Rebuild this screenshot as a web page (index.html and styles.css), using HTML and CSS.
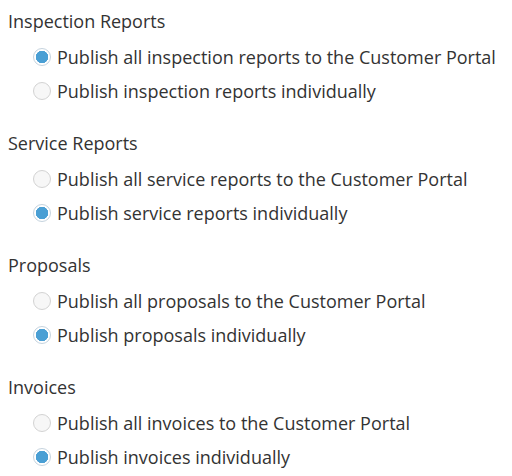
FILE: index.html
```html
<!DOCTYPE html>
<html lang="en">
<head>
  <meta charset="UTF-8">
  <title>Customer Portal Publishing</title>
  <link rel="stylesheet" href="styles.css">
</head>
<body>
  <!-- Inspection Reports -->
  <div class="group">
    <div class="group-title">Inspection Reports</div>
    <label class="option"><input type="radio" name="inspection" checked> Publish all inspection reports to the Customer Portal</label>
    <label class="option"><input type="radio" name="inspection"> Publish inspection reports individually</label>
  </div>

  <!-- Service Reports -->
  <div class="group">
    <div class="group-title">Service Reports</div>
    <label class="option"><input type="radio" name="service"> Publish all service reports to the Customer Portal</label>
    <label class="option"><input type="radio" name="service" checked> Publish service reports individually</label>
  </div>

  <!-- Proposals -->
  <div class="group">
    <div class="group-title">Proposals</div>
    <label class="option"><input type="radio" name="proposals"> Publish all proposals to the Customer Portal</label>
    <label class="option"><input type="radio" name="proposals" checked> Publish proposals individually</label>
  </div>

  <!-- Invoices -->
  <div class="group">
    <div class="group-title">Invoices</div>
    <label class="option"><input type="radio" name="invoices"> Publish all invoices to the Customer Portal</label>
    <label class="option"><input type="radio" name="invoices" checked> Publish invoices individually</label>
  </div>
</body>
</html>
```

FILE: styles.css
```css
/* Global Settings */
* { margin: 0; padding: 0; box-sizing: border-box; }
body {
  background: white;
  font-family: 'Open Sans', sans-serif;
  font-size: 18px;
  color: #333;
  padding: 8px 8px 0 8px;
}

/* ---------- Groups ---------- */
.group {
  display: flex;
  flex-direction: column;
  margin-bottom: 22px;
}
.group-title {
  line-height: 26px;
  margin-bottom: 6px;
}

/* ---------- Radio options ---------- */
.option {
  display: flex;
  align-items: center;
  gap: 6px;
  height: 34px;
  padding-left: 25px;
  cursor: pointer;
}
.option input {
  appearance: none;
  width: 18px;
  height: 18px;
  border-radius: 50%;
  border: 1px solid #d3d3d3;
  background: #f7f7f7;
  flex-shrink: 0;
}
.option input:checked {
  border-color: #c5d3de;
  background: radial-gradient(circle, #4a9fd4 0 6px, white 6.5px);
}
```
